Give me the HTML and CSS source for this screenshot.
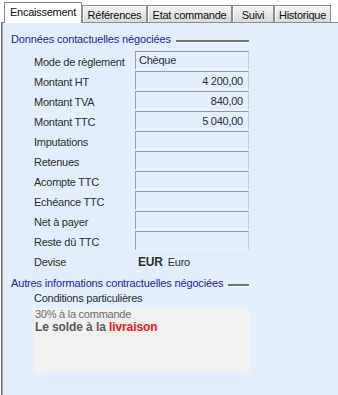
FILE: index.html
```html
<!DOCTYPE html>
<html lang="fr">
<head>
<meta charset="utf-8">
<title>Encaissement</title>
<link rel="stylesheet" href="styles.css">
</head>
<body>
<div class="tabs">
  <div class="tab active t1">Encaissement</div>
  <div class="tab t2">Références</div>
  <div class="tab t3">Etat commande</div>
  <div class="tab t4">Suivi</div>
  <div class="tab t5">Historique</div>
</div>
<div class="panel">
  <div class="section-head first"><span class="head-text">Données contactuelles négociées</span><span class="head-line"></span></div>
  <div class="row"><span class="label">Mode de règlement</span><span class="field">Chèque</span></div>
  <div class="row"><span class="label">Montant HT</span><span class="field num">4 200,00</span></div>
  <div class="row"><span class="label">Montant TVA</span><span class="field num">840,00</span></div>
  <div class="row"><span class="label">Montant TTC</span><span class="field num">5 040,00</span></div>
  <div class="row"><span class="label">Imputations</span><span class="field"></span></div>
  <div class="row"><span class="label">Retenues</span><span class="field"></span></div>
  <div class="row"><span class="label">Acompte TTC</span><span class="field"></span></div>
  <div class="row"><span class="label">Echéance TTC</span><span class="field"></span></div>
  <div class="row"><span class="label">Net à payer</span><span class="field"></span></div>
  <div class="row"><span class="label">Reste dû TTC</span><span class="field"></span></div>
  <div class="row"><span class="label">Devise</span><span class="value"><b class="cur">EUR</b><span class="cur-name">Euro</span></span></div>
  <div class="section-head second"><span class="head-text">Autres informations contractuelles négociées</span><span class="head-line"></span></div>
  <div class="sub-label">Conditions particulières</div>
  <div class="memo">
    <div class="memo-l1">30% à la commande</div>
    <div class="memo-l2">Le solde à la <span class="red">livraison</span></div>
  </div>
</div>
</body>
</html>
```
FILE: styles.css
```css
html, body {
  margin: 0;
  padding: 0;
}
body {
  width: 338px;
  height: 395px;
  overflow: hidden;
  background: #ffffff;
  font-family: "Liberation Sans", Arial, sans-serif;
  font-size: 11px;
  letter-spacing: -0.25px;
  color: #2e2e2e;
  display: flex;
  flex-direction: column;
}
.tabs {
  height: 22px;
  display: flex;
  align-items: flex-end;
  padding-left: 4px;
  position: relative;
  z-index: 1;
  flex: none;
}
.tab {
  box-sizing: border-box;
  height: 17px;
  border: 1px solid #8b8d94;
  border-bottom: none;
  background: linear-gradient(#f5f5f5, #e6e6e6 50%, #d9d9d9);
  box-shadow: inset 1px 1px 0 #ffffff;
  display: flex;
  align-items: center;
  justify-content: center;
  color: #111111;
  padding-top: 1px;
}
.tab.active {
  height: 21px;
  margin-bottom: -1px;
  background: #ffffff;
  box-shadow: none;
  border-color: #8f8f8f;
  padding-top: 0;
  padding-bottom: 2px;
}
.t1 { width: 78px; }
.t2 { width: 65px; }
.t3 { width: 85px; }
.t4 { width: 42px; }
.t5 { width: 57px; }
.panel {
  flex: 1;
  margin-left: 1px;
  border-left: 1px solid #6b6b6b;
  border-top: 1px solid #8e8e8e;
  background: #e3eefd;
  box-shadow: inset 1px 0 0 #a6abb3;
  padding-left: 9px;
}
.section-head {
  display: flex;
  align-items: center;
  width: 238px;
  line-height: 14px;
  height: 14px;
  color: #1c1ca0;
  letter-spacing: -0.15px;
}
.section-head.first {
  margin-top: 9px;
  margin-bottom: 5px;
}
.section-head.second {
  margin-top: 5px;
}
.head-text {
  white-space: nowrap;
}
.head-line {
  flex: 1;
  height: 2px;
  margin-left: 5px;
  margin-top: 4px;
  background: #747474;
  border-bottom: 1px solid #ffffff;
}
.row {
  display: flex;
  margin-left: 23px;
  height: 20px;
}
.label {
  width: 101px;
  line-height: 19px;
  padding-top: 2px;
  white-space: nowrap;
}
.field {
  box-sizing: border-box;
  width: 114px;
  height: 19px;
  border-top: 1px solid #9a9a9a;
  border-left: 1px solid #9e9e9e;
  border-right: 1px solid #c9ccd1;
  border-bottom: 1px solid #eef3fb;
  padding: 0 5px 0 3px;
  line-height: 17px;
  white-space: nowrap;
}
.field.num {
  text-align: right;
  padding-top: 1px;
}
.value {
  line-height: 19px;
  padding-top: 2px;
  padding-left: 3px;
}
.cur {
  font-weight: bold;
  font-size: 12px;
  letter-spacing: -0.2px;
}
.cur-name {
  margin-left: 5px;
}
.sub-label {
  margin-left: 23px;
  line-height: 14px;
  margin-top: 1px;
}
.memo {
  margin-left: 23px;
  margin-top: 3px;
  width: 216px;
  height: 65px;
  background: #f0f0f0;
  padding-left: 1px;
  box-sizing: border-box;
}
.memo-l1 {
  line-height: 13px;
  color: #6e6e6e;
}
.memo-l2 {
  line-height: 13px;
  font-weight: bold;
  font-size: 12px;
  letter-spacing: -0.1px;
  color: #5a5a5a;
}
.red {
  color: #f01414;
}
```
